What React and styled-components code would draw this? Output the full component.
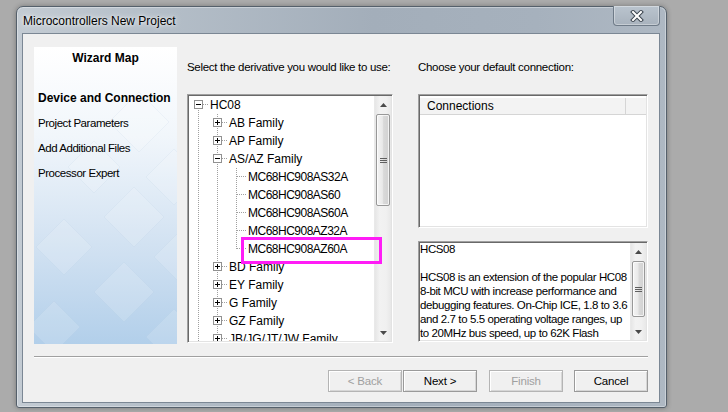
import React from 'react'
import styled, { createGlobalStyle } from 'styled-components'

const GlobalStyle = createGlobalStyle`
  html, body { margin: 0; padding: 0; background: #ababab; }
  body {
    font-family: "Liberation Sans", Arial, sans-serif;
    font-size: 12px;
    color: #000;
  }
  * { box-sizing: border-box; }
`

const dotV = 'repeating-linear-gradient(to bottom, #a0a0a0 0 1px, transparent 1px 2px)'
const dotH = 'repeating-linear-gradient(to right, #a0a0a0 0 1px, transparent 1px 2px)'

const Screen = styled.div`
  width: 728px;
  height: 412px;
  overflow: hidden;
  background: #ababab;
  padding: 6px 0 0 16px;
`

const Window = styled.div`
  width: 651px;
  height: 402px;
  border: 1px solid #55606b;
  border-radius: 7px 7px 3px 3px;
  background: linear-gradient(90deg, #c3cbd3 0%, #b4bec8 22%, #a3aeba 55%, #a6b1bd 80%, #aeb8c3 100%);
  box-shadow: 0 0 5px rgba(0, 0, 0, 0.3), inset 0 0 0 1px rgba(255, 255, 255, 0.35);
  display: flex;
  flex-direction: column;
  padding: 0 6px 4px 5px;
`

const TitleBar = styled.div`
  height: 26px;
  flex: none;
  display: flex;
  align-items: flex-start;
  justify-content: space-between;
`

const Title = styled.div`
  padding: 7px 0 0 1px;
  font-size: 12px;
  line-height: 15px;
  color: #000;
  text-shadow: 0 0 6px rgba(255, 255, 255, 0.9), 0 0 3px rgba(255, 255, 255, 0.8);
`

const CloseButton = styled.div`
  width: 47px;
  height: 20px;
  margin-top: -1px;
  border: 1px solid #6f7b88;
  border-top: none;
  border-radius: 0 0 4px 4px;
  background: linear-gradient(#bac4ce, #a8b2bd);
  box-shadow: inset 0 0 0 1px rgba(255, 255, 255, 0.35);
  display: flex;
  align-items: center;
  justify-content: center;
`

const Client = styled.div`
  flex: 1;
  background: #f0f0f0;
  border: 1px solid #7b8794;
  padding: 13px 11px 0 11px;
  display: flex;
  flex-direction: column;
`

const MainRow = styled.div`
  display: flex;
  height: 297px;
`

const MapPanel = styled.div`
  position: relative;
  width: 143px;
  flex: none;
  overflow: hidden;
  background: linear-gradient(180deg, #ffffff 0%, #f1f6fb 30%, #cfe0f1 70%, #b2cfea 100%);
`

const Decor = styled.svg`
  position: absolute;
  left: 0;
  top: 0;
`

const MapContent = styled.div`
  position: relative;
  padding: 4px 4px 0 4px;
`

const MapTitle = styled.div`
  font-weight: bold;
  text-align: center;
  line-height: 15px;
  margin-bottom: 20px;
`

const MapItem = styled.div`
  height: 25px;
  line-height: 25px;
  white-space: nowrap;
  font-size: ${p => (p.$active ? '12px' : '11.5px')};
  font-weight: ${p => (p.$active ? 'bold' : 'normal')};
  letter-spacing: ${p => (p.$active ? '0' : '-0.45px')};
`

const Column = styled.div`
  display: flex;
  flex-direction: column;
  flex: none;
  width: ${p => p.$width}px;
  margin-left: ${p => p.$gap}px;
`

const Caption = styled.div`
  height: 47px;
  padding-top: 13px;
  line-height: 15px;
  font-size: 11.5px;
  letter-spacing: -0.3px;
  white-space: nowrap;
`

const Sunken = styled.div`
  position: relative;
  background: #fff;
  border: 1px solid;
  border-color: #a0a0a0 #ffffff #ffffff #a0a0a0;
  box-shadow: inset 1px 1px 0 #696969, inset -1px -1px 0 #e3e3e3;
  padding: 1px;
  display: flex;
  height: ${p => p.$height}px;
  margin-top: ${p => p.$top || 0}px;
  overflow: hidden;
`

const TreeList = styled.div`
  flex: 1;
  overflow: hidden;
`

const TreeRow = styled.div`
  display: flex;
  height: 18px;
  align-items: flex-start;
`

const Guide = styled.span`
  flex: none;
  width: 19px;
  height: 18px;
  background: ${p => (p.$line ? `${dotV} 9px 0 / 1px 18px no-repeat` : 'none')};
`

const Connector = styled.span`
  flex: none;
  width: 19px;
  height: 18px;
  background:
    ${dotH} 10px 8px / 9px 1px no-repeat,
    ${p =>
      p.$kind === 'first'
        ? `${dotV} 9px 8px / 1px 10px no-repeat`
        : p.$kind === 'last'
        ? `${dotV} 9px 0 / 1px 9px no-repeat`
        : `${dotV} 9px 0 / 1px 18px no-repeat`};
  svg {
    display: block;
    margin: 4px 0 0 5px;
  }
`

const NodeLabel = styled.span`
  padding: 0 2px;
  line-height: 18px;
  white-space: nowrap;
  letter-spacing: ${p => (p.$part ? '-0.5px' : '0')};
`

const Marker = styled.div`
  position: absolute;
  left: 53px;
  top: 142px;
  width: 141px;
  height: 27px;
  border: 3px solid #ff1cf6;
  pointer-events: none;
`

const ScrollBar = styled.div`
  flex: none;
  width: ${p => p.$width}px;
  display: flex;
  flex-direction: column;
  background: linear-gradient(90deg, #e6e6e6, #f2f2f2 30%, #f0f0f0 70%, #e8e8e8);
  border-left: 1px solid #e9e9e9;
`

const Arrow = styled.div`
  flex: none;
  height: 17px;
  display: flex;
  align-items: center;
  justify-content: center;
`

const Track = styled.div`
  flex: 1;
`

const Thumb = styled.div`
  margin: 1px 1px 0 1px;
  height: ${p => p.$height}px;
  border: 1px solid #989898;
  border-radius: 2px;
  background: linear-gradient(90deg, #f4f4f4 0%, #e9e9e9 45%, #d9d9d9 55%, #d2d2d2 100%);
  box-shadow: inset 0 0 0 1px rgba(255, 255, 255, 0.7);
  display: flex;
  align-items: center;
  justify-content: center;
`

const Grip = styled.div`
  width: 7px;
  height: 5px;
  background: repeating-linear-gradient(to bottom, #5f5f5f 0 1px, transparent 1px 2px);
`

const ListBody = styled.div`
  flex: 1;
  display: flex;
  flex-direction: column;
`

const HeaderRow = styled.div`
  display: flex;
  height: 18px;
  margin-top: 1px;
  background: #f3f3f3;
  border-top: 1px solid #ffffff;
  border-bottom: 1px solid #d5d5d5;
`

const HeaderCell = styled.div`
  width: ${p => (p.$width ? `${p.$width}px` : 'auto')};
  flex: ${p => (p.$width ? 'none' : '1')};
  padding-left: 7px;
  line-height: 17px;
  font-size: 12px;
  border-right: ${p => (p.$width ? '1px solid #d5d5d5' : 'none')};
`

const InfoText = styled.div`
  flex: 1;
  margin-top: -1px;
  font-size: 11.5px;
  line-height: 14px;
  letter-spacing: -0.4px;
  white-space: nowrap;
  overflow: hidden;
`

const Separator = styled.div`
  margin-top: 12px;
  border-top: 1px solid #a0a0a0;
  border-bottom: 1px solid #ffffff;
`

const ButtonRow = styled.div`
  display: flex;
  justify-content: flex-end;
  margin-top: 12px;
`

const Button = styled.button`
  width: 74px;
  height: 22px;
  margin-left: ${p => p.$gap || 0}px;
  padding: 0;
  font-family: "Liberation Sans", Arial, sans-serif;
  font-size: 11.5px;
  letter-spacing: -0.2px;
  color: ${p => (p.disabled ? '#a0a0a0' : '#000')};
  background: #f0f0f0;
  border: 1px solid ${p => (p.disabled ? '#b4b4b4' : '#9a9a9a')};
  box-shadow: inset 1px 1px 0 #ffffff, inset -1px -1px 0 #d6d6d6;
`

const UpArrow = () => (
  <svg width="7" height="4" viewBox="0 0 7 4">
    <path d="M0 4 L3.5 0 L7 4 Z" fill="#4a4a4a" />
  </svg>
)

const DownArrow = () => (
  <svg width="7" height="4" viewBox="0 0 7 4">
    <path d="M0 0 L3.5 4 L7 0 Z" fill="#4a4a4a" />
  </svg>
)

const ExpandBox = ({ open }) => (
  <svg width="9" height="9" viewBox="0 0 9 9">
    <rect x="0.5" y="0.5" width="8" height="8" fill="#fff" stroke="#919191" />
    <path d="M2 4.5h5" stroke="#000" />
    {!open && <path d="M4.5 2v5" stroke="#000" />}
  </svg>
)

const CloseGlyph = () => (
  <svg width="14" height="12" viewBox="0 0 14 12">
    <path d="M3 2 L11 10 M11 2 L3 10" stroke="#3d4650" strokeWidth="4" strokeLinecap="square" />
    <path d="M3 2 L11 10 M11 2 L3 10" stroke="#ffffff" strokeWidth="2" strokeLinecap="square" />
  </svg>
)

const tree = [
  { label: 'HC08', guides: [], kind: 'first', box: 'open' },
  { label: 'AB Family', guides: [true], kind: 'mid', box: 'closed' },
  { label: 'AP Family', guides: [true], kind: 'mid', box: 'closed' },
  { label: 'AS/AZ Family', guides: [true], kind: 'mid', box: 'open' },
  { label: 'MC68HC908AS32A', guides: [true, true], kind: 'mid', part: true },
  { label: 'MC68HC908AS60', guides: [true, true], kind: 'mid', part: true },
  { label: 'MC68HC908AS60A', guides: [true, true], kind: 'mid', part: true },
  { label: 'MC68HC908AZ32A', guides: [true, true], kind: 'mid', part: true },
  { label: 'MC68HC908AZ60A', guides: [true, true], kind: 'last', part: true },
  { label: 'BD Family', guides: [true], kind: 'mid', box: 'closed' },
  { label: 'EY Family', guides: [true], kind: 'mid', box: 'closed' },
  { label: 'G Family', guides: [true], kind: 'mid', box: 'closed' },
  { label: 'GZ Family', guides: [true], kind: 'mid', box: 'closed' },
  { label: 'JB/JG/JT/JW Family', guides: [true], kind: 'mid', box: 'closed' },
]

const steps = ['Project Parameters', 'Add Additional Files', 'Processor Expert']

const diamonds = [
  [105, 75, 30], [60, 120, 26], [140, 130, 28], [100, 170, 30],
  [30, 200, 28], [150, 210, 30], [90, 245, 30], [20, 280, 26], [140, 290, 28],
]

const App = () => {
  return (
    <Screen>
      <GlobalStyle />
      <Window>
        <TitleBar>
          <Title>Microcontrollers New Project</Title>
          <CloseButton>
            <CloseGlyph />
          </CloseButton>
        </TitleBar>
        <Client>
          <MainRow>
            <MapPanel>
              <Decor width="143" height="297" viewBox="0 0 143 297">
                {diamonds.map(([x, y, r], i) => (
                  <path
                    key={i}
                    d={`M${x} ${y - r} L${x + r} ${y} L${x} ${y + r} L${x - r} ${y} Z`}
                    fill="#ffffff"
                    fillOpacity="0.14"
                    stroke="#9fbad6"
                    strokeOpacity="0.1"
                  />
                ))}
              </Decor>
              <MapContent>
                <MapTitle>Wizard Map</MapTitle>
                <MapItem $active>Device and Connection</MapItem>
                {steps.map(s => (
                  <MapItem key={s}>{s}</MapItem>
                ))}
              </MapContent>
            </MapPanel>

            <Column $width={206} $gap={10}>
              <Caption>Select the derivative you would like to use:</Caption>
              <Sunken $height={249}>
                <TreeList>
                  {tree.map(node => (
                    <TreeRow key={node.label}>
                      {node.guides.map((g, i) => (
                        <Guide key={i} $line={g} />
                      ))}
                      <Connector $kind={node.kind}>
                        {node.box && <ExpandBox open={node.box === 'open'} />}
                      </Connector>
                      <NodeLabel $part={node.part}>{node.label}</NodeLabel>
                    </TreeRow>
                  ))}
                </TreeList>
                <ScrollBar $width={17}>
                  <Arrow><UpArrow /></Arrow>
                  <Track>
                    <Thumb $height={92}><Grip /></Thumb>
                  </Track>
                  <Arrow><DownArrow /></Arrow>
                </ScrollBar>
                <Marker />
              </Sunken>
            </Column>

            <Column $width={230} $gap={25}>
              <Caption>Choose your default connection:</Caption>
              <Sunken $height={134}>
                <ListBody>
                  <HeaderRow>
                    <HeaderCell $width={206}>Connections</HeaderCell>
                    <HeaderCell />
                  </HeaderRow>
                </ListBody>
              </Sunken>
              <Sunken $height={101} $top={13}>
                <InfoText>
                  HCS08
                  <br />
                  <br />
                  HCS08 is an extension of the popular HC08
                  <br />
                  8-bit MCU with increase performance and
                  <br />
                  debugging features. On-Chip ICE, 1.8 to 3.6
                  <br />
                  and 2.7 to 5.5 operating voltage ranges, up
                  <br />
                  to 20MHz bus speed, up to 62K Flash
                </InfoText>
                <ScrollBar $width={16}>
                  <Arrow><UpArrow /></Arrow>
                  <Track>
                    <Thumb $height={56}><Grip /></Thumb>
                  </Track>
                  <Arrow><DownArrow /></Arrow>
                </ScrollBar>
              </Sunken>
            </Column>
          </MainRow>

          <Separator />

          <ButtonRow>
            <Button disabled>&lt; Back</Button>
            <Button $gap={1}>Next &gt;</Button>
            <Button disabled $gap={12}>Finish</Button>
            <Button $gap={11}>Cancel</Button>
          </ButtonRow>
        </Client>
      </Window>
    </Screen>
  )
}

export default App
